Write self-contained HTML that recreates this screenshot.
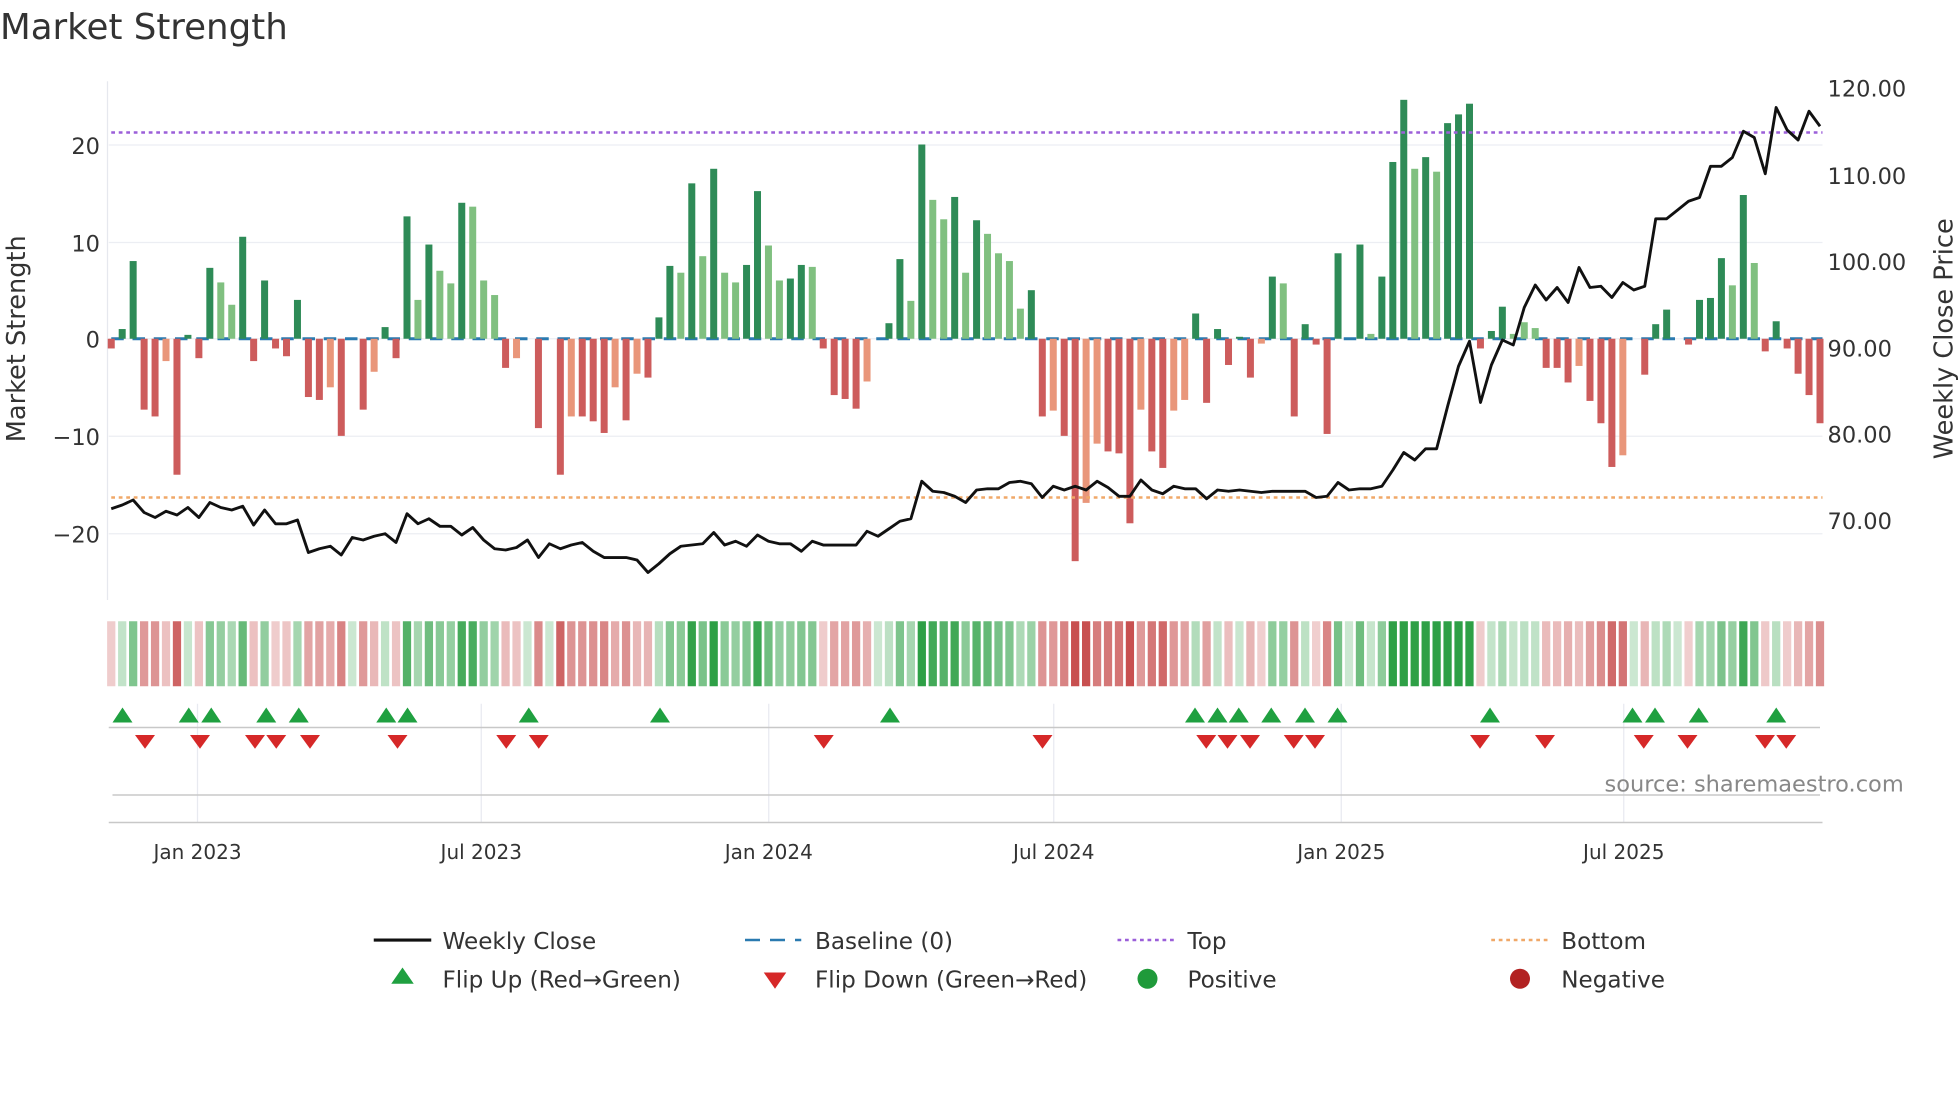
<!DOCTYPE html>
<html><head><meta charset="utf-8"><style>
html,body{margin:0;padding:0;background:#fff;}
svg{display:block;font-family:"DejaVu Sans","Liberation Sans",sans-serif;}
</style></head><body>
<svg id="c" width="1960" height="1102" viewBox="0 0 1568 881.6" xmlns="http://www.w3.org/2000/svg">
<rect width="1568" height="882" fill="#fff"/>
<text x="0" y="31" font-size="28.5" fill="#333">Market Strength</text>
<g id="grid" stroke="#eceef3" stroke-width="1"></g>
<line x1="86" y1="65" x2="86" y2="480" stroke="#e6e8ee"/>
<line x1="89" y1="271" x2="1458" y2="271" stroke="#2a7ab0" stroke-width="2.4" stroke-dasharray="10,7"/>
<g id="bars"></g>
<line x1="89" y1="106" x2="1458" y2="106" stroke="#9b5fd9" stroke-width="2" stroke-dasharray="3,3"/>
<line x1="89" y1="398" x2="1458" y2="398" stroke="#f0a868" stroke-width="2" stroke-dasharray="3,3"/>
<polyline id="price" fill="none" stroke="#111" stroke-width="2.3" stroke-linejoin="round"/>
<g font-size="18" fill="#333" text-anchor="end">
<text x="80" y="123">20</text><text x="80" y="201">10</text><text x="80" y="278">0</text><text x="80" y="356">−10</text><text x="80" y="434">−20</text>
</g>
<g font-size="18" fill="#333">
<text x="1462" y="77">120.00</text><text x="1462" y="147">110.00</text><text x="1462" y="216">100.00</text><text x="1462" y="285">90.00</text><text x="1462" y="354">80.00</text><text x="1462" y="423">70.00</text>
</g>
<text transform="translate(20,271) rotate(-90)" font-size="20.5" fill="#333" text-anchor="middle">Market Strength</text>
<text transform="translate(1562,271) rotate(-90)" font-size="20.5" fill="#333" text-anchor="middle">Weekly Close Price</text>
<g id="heat"></g>
<g id="vg" stroke="#e8eaf0"></g>
<line x1="87" y1="582" x2="1456" y2="582" stroke="#c8c8c8" stroke-width="1.2"/>
<line x1="90" y1="636" x2="1456" y2="636" stroke="#c8c8c8" stroke-width="1.2"/>
<line x1="87" y1="658" x2="1458" y2="658" stroke="#c8c8c8" stroke-width="1.2"/>
<g id="mk"></g>
<text x="1523" y="633" font-size="18" fill="#888" text-anchor="end">source: sharemaestro.com</text>
<g font-size="16" fill="#333" text-anchor="middle">
<text x="158" y="687">Jan 2023</text><text x="385" y="687">Jul 2023</text><text x="615" y="687">Jan 2024</text><text x="843" y="687">Jul 2024</text><text x="1073" y="687">Jan 2025</text><text x="1299" y="687">Jul 2025</text>
</g>
<g font-size="18.5" fill="#333">
<line x1="299" y1="752" x2="345" y2="752" stroke="#111" stroke-width="2.5"/>
<text x="354" y="759">Weekly Close</text>
<line x1="596" y1="752" x2="641" y2="752" stroke="#2a7ab0" stroke-width="2" stroke-dasharray="12,8"/>
<text x="652" y="759">Baseline (0)</text>
<line x1="894" y1="752" x2="939" y2="752" stroke="#9b5fd9" stroke-width="2" stroke-dasharray="3,3"/>
<text x="950" y="759">Top</text>
<line x1="1193" y1="752" x2="1238" y2="752" stroke="#f0a868" stroke-width="2" stroke-dasharray="3,3"/>
<text x="1249" y="759">Bottom</text>
<polygon points="322,774 331,787 313,787" fill="#1fa040"/>
<text x="354" y="790">Flip Up (Red→Green)</text>
<polygon points="611,778 629,778 620,791" fill="#d62828"/>
<text x="652" y="790">Flip Down (Green→Red)</text>
<circle cx="918" cy="783" r="8" fill="#1f9a3a"/>
<text x="950" y="790">Positive</text>
<circle cx="1216" cy="783" r="8" fill="#b22222"/>
<text x="1249" y="790">Negative</text>
</g>
</svg>
<script>
var NS="http://www.w3.org/2000/svg";
function el(p,t,a){var e=document.createElementNS(NS,t);for(var k in a)e.setAttribute(k,a[k]);document.getElementById(p).appendChild(e);return e;}
[116,194,271,349,427].forEach(function(y){el("grid","line",{x1:87,y1:y,x2:1458,y2:y});});
[158,385,615,843,1073,1299].forEach(function(x){el("vg","line",{x1:x,y1:563,x2:x,y2:658});});
var B="-1r 1d 8d -7.3r -8r -2.3o -14r 0.4d -2r 7.3d 5.8l 3.5l 10.5d -2.3r 6d -1r -1.8r 4d -6r -6.3r -5o -10r 0d -7.3r -3.4o 1.2d -2r 12.6d 4l 9.7d 7l 5.7l 14d 13.6l 6l 4.5l -3r -2o 0d -9.2r 0d -14r -8o -8r -8.5r -9.7r -5o -8.4r -3.6o -4r 2.2d 7.5d 6.8l 16d 8.5l 17.5d 6.8l 5.8l 7.6d 15.2d 9.6l 6l 6.2d 7.6d 7.4l -1r -5.8r -6.2r -7.2r -4.4o 0d 1.6d 8.2d 3.9l 20d 14.3l 12.3l 14.6d 6.8l 12.2d 10.8l 8.8l 8l 3.1l 5d -8r -7.4o -10r -22.9r -16.9o -10.8o -11.6r -11.8r -19r -7.3o -11.6r -13.3r -7.4o -6.3o 2.6d -6.6r 1d -2.7r 0.2d -4r -0.5o 6.4d 5.7l -8r 1.5d -0.6r -9.8r 8.8d 0d 9.7d 0.5l 6.4d 18.2d 24.6d 17.5l 18.7d 17.2l 22.2d 23.1d 24.2d -1r 0.8d 3.3d 0.5l 1.7l 1.1l -3r -3r -4.5r -2.8o -6.4r -8.7r -13.2r -12o 0d -3.7r 1.5d 3d 0d -0.6r 4d 4.2d 8.3d 5.5l 14.8d 7.8l -1.3r 1.8d -1r -3.6r -5.8r -8.7r".split(" ");
var col={d:"#2e8b57",l:"#80c080",r:"#cd5c5c",o:"#e9967a"};
var n=B.length, x0=89, dx=(1456-89)/(n-1);
B.forEach(function(s,i){
 var v=parseFloat(s),t=s.slice(-1),x=x0+i*dx,h=Math.abs(v)*7.77;
 if(h>0.1) el("bars","rect",{x:x-2.8,y:v>0?271-h:271,width:5.6,height:h,fill:col[t]});
 var a=Math.min(1,0.25+Math.abs(v)/22);
 var c=v>=0?"rgba(46,160,70,"+a+")":"rgba(200,80,80,"+a+")";
 el("heat","rect",{x:x-3.3,y:497,width:6.6,height:52,fill:c});
});
var P=[407,404,400,410,414,409,412,406,414,402,406,408,405,420,408,419,419,416,442,439,437,444,430,432,429,427,434,411,419,415,421,421,428,422,432,439,440,438,432,446,435,439,436,434,441,446,446,446,448,458,451,443,437,436,435,426,436,433,437,428,433,435,435,441,433,436,436,436,436,425,429,423,417,415,385,393,394,397,402,392,391,391,386,385,387,398,389,392,389,392,385,390,397,397,384,392,395,389,391,391,399,392,393,392,393,394,393,393,393,393,398,397,386,392,391,391,389,376,362,368,359,359,325,293,273,322,292,272,276,246,228,240,230,242,214,230,229,238,226,232,229,175,175,168,161,158,133,133,126,105,110,139,86,104,112,89,101];
var pts=P.map(function(y,i){return (x0+i*(1456-89)/(P.length-1)).toFixed(1)+","+y;}).join(" ");
document.getElementById("price").setAttribute("points",pts);
[98,151,169,213,239,309,326,423,528,712,956,974,991,1017,1044,1070,1192,1306,1324,1359,1421].forEach(function(x){el("mk","polygon",{points:(x)+",566 "+(x+8)+",578 "+(x-8)+",578",fill:"#1fa040"});});
[116,160,204,221,248,318,405,431,659,834,965,982,1000,1035,1052,1184,1236,1315,1350,1412,1429].forEach(function(x){el("mk","polygon",{points:(x-8)+",588 "+(x+8)+",588 "+x+",599",fill:"#d62828"});});
</script>
</body></html>
